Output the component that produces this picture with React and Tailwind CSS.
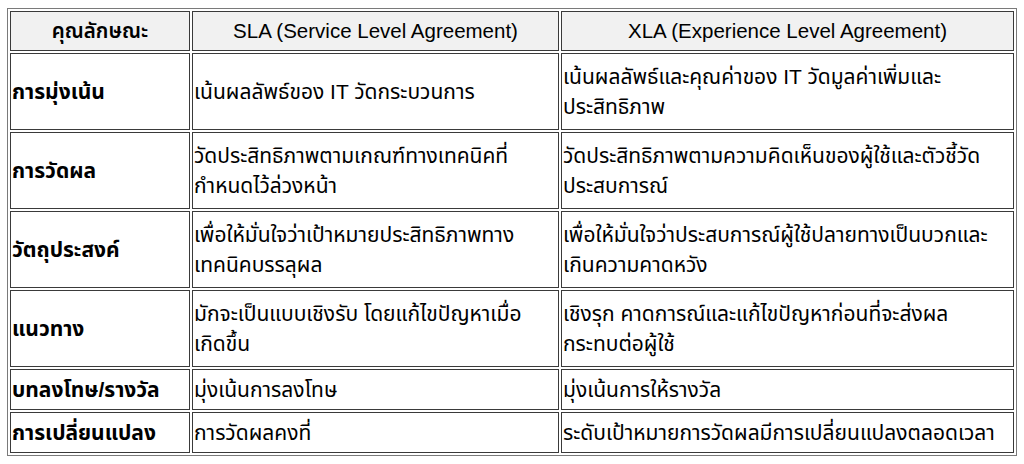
import React from 'react';

const rows = [
  {
    label: 'การมุ่งเน้น',
    sla: 'เน้นผลลัพธ์ของ IT วัดกระบวนการ',
    xla: ['เน้นผลลัพธ์และคุณค่าของ IT วัดมูลค่าเพิ่มและ', 'ประสิทธิภาพ'],
    tall: true,
  },
  {
    label: 'การวัดผล',
    sla: ['วัดประสิทธิภาพตามเกณฑ์ทางเทคนิคที่', 'กำหนดไว้ล่วงหน้า'],
    xla: ['วัดประสิทธิภาพตามความคิดเห็นของผู้ใช้และตัวชี้วัด', 'ประสบการณ์'],
    tall: true,
  },
  {
    label: 'วัตถุประสงค์',
    sla: ['เพื่อให้มั่นใจว่าเป้าหมายประสิทธิภาพทาง', 'เทคนิคบรรลุผล'],
    xla: ['เพื่อให้มั่นใจว่าประสบการณ์ผู้ใช้ปลายทางเป็นบวกและ', 'เกินความคาดหวัง'],
    tall: true,
  },
  {
    label: 'แนวทาง',
    sla: ['มักจะเป็นแบบเชิงรับ โดยแก้ไขปัญหาเมื่อ', 'เกิดขึ้น'],
    xla: ['เชิงรุก คาดการณ์และแก้ไขปัญหาก่อนที่จะส่งผล', 'กระทบต่อผู้ใช้'],
    tall: true,
  },
  {
    label: 'บทลงโทษ/รางวัล',
    sla: 'มุ่งเน้นการลงโทษ',
    xla: 'มุ่งเน้นการให้รางวัล',
  },
  {
    label: 'การเปลี่ยนแปลง',
    sla: 'การวัดผลคงที่',
    xla: 'ระดับเป้าหมายการวัดผลมีการเปลี่ยนแปลงตลอดเวลา',
  },
];

const Lines = ({ value }) =>
  Array.isArray(value) ? (
    value.map((line, i) => <div key={i}>{line}</div>)
  ) : (
    <div>{value}</div>
  );

export default function App() {
  return (
    <div className="bg-white w-[1024px] h-[464px] pt-[8px] pl-[7px] font-['Liberation_Sans','Noto_Sans_Thai','Noto_Sans',sans-serif] text-black text-[21px] leading-[30px]">
      <table className="table-fixed w-[1010px] border-separate border-spacing-[2px] border border-[#7a7a7a]">
        <thead>
          <tr className="text-[20.5px]">
            <th className="w-[180px] h-[40px] p-0 border border-[#3a3a3a] bg-[#f1f1f1] font-semibold text-center">
              คุณลักษณะ
            </th>
            <th className="w-[367px] h-[40px] p-0 border border-[#3a3a3a] bg-[#f1f1f1] font-normal text-center">
              SLA (Service Level Agreement)
            </th>
            <th className="w-[453px] h-[40px] p-0 border border-[#3a3a3a] bg-[#f1f1f1] font-normal text-center">
              XLA (Experience Level Agreement)
            </th>
          </tr>
        </thead>
        <tbody>
          {rows.map((r) => (
            <tr key={r.label}>
              <td
                className={`${r.tall ? 'h-[77px]' : 'h-[41px]'} p-0 pl-[1px] border border-[#3a3a3a] font-bold align-middle whitespace-nowrap`}
              >
                {r.label}
              </td>
              <td className="p-0 pl-[1px] border border-[#3a3a3a] align-middle whitespace-nowrap">
                <Lines value={r.sla} />
              </td>
              <td className="p-0 pl-[1px] border border-[#3a3a3a] align-middle whitespace-nowrap">
                <Lines value={r.xla} />
              </td>
            </tr>
          ))}
        </tbody>
      </table>
    </div>
  );
}
